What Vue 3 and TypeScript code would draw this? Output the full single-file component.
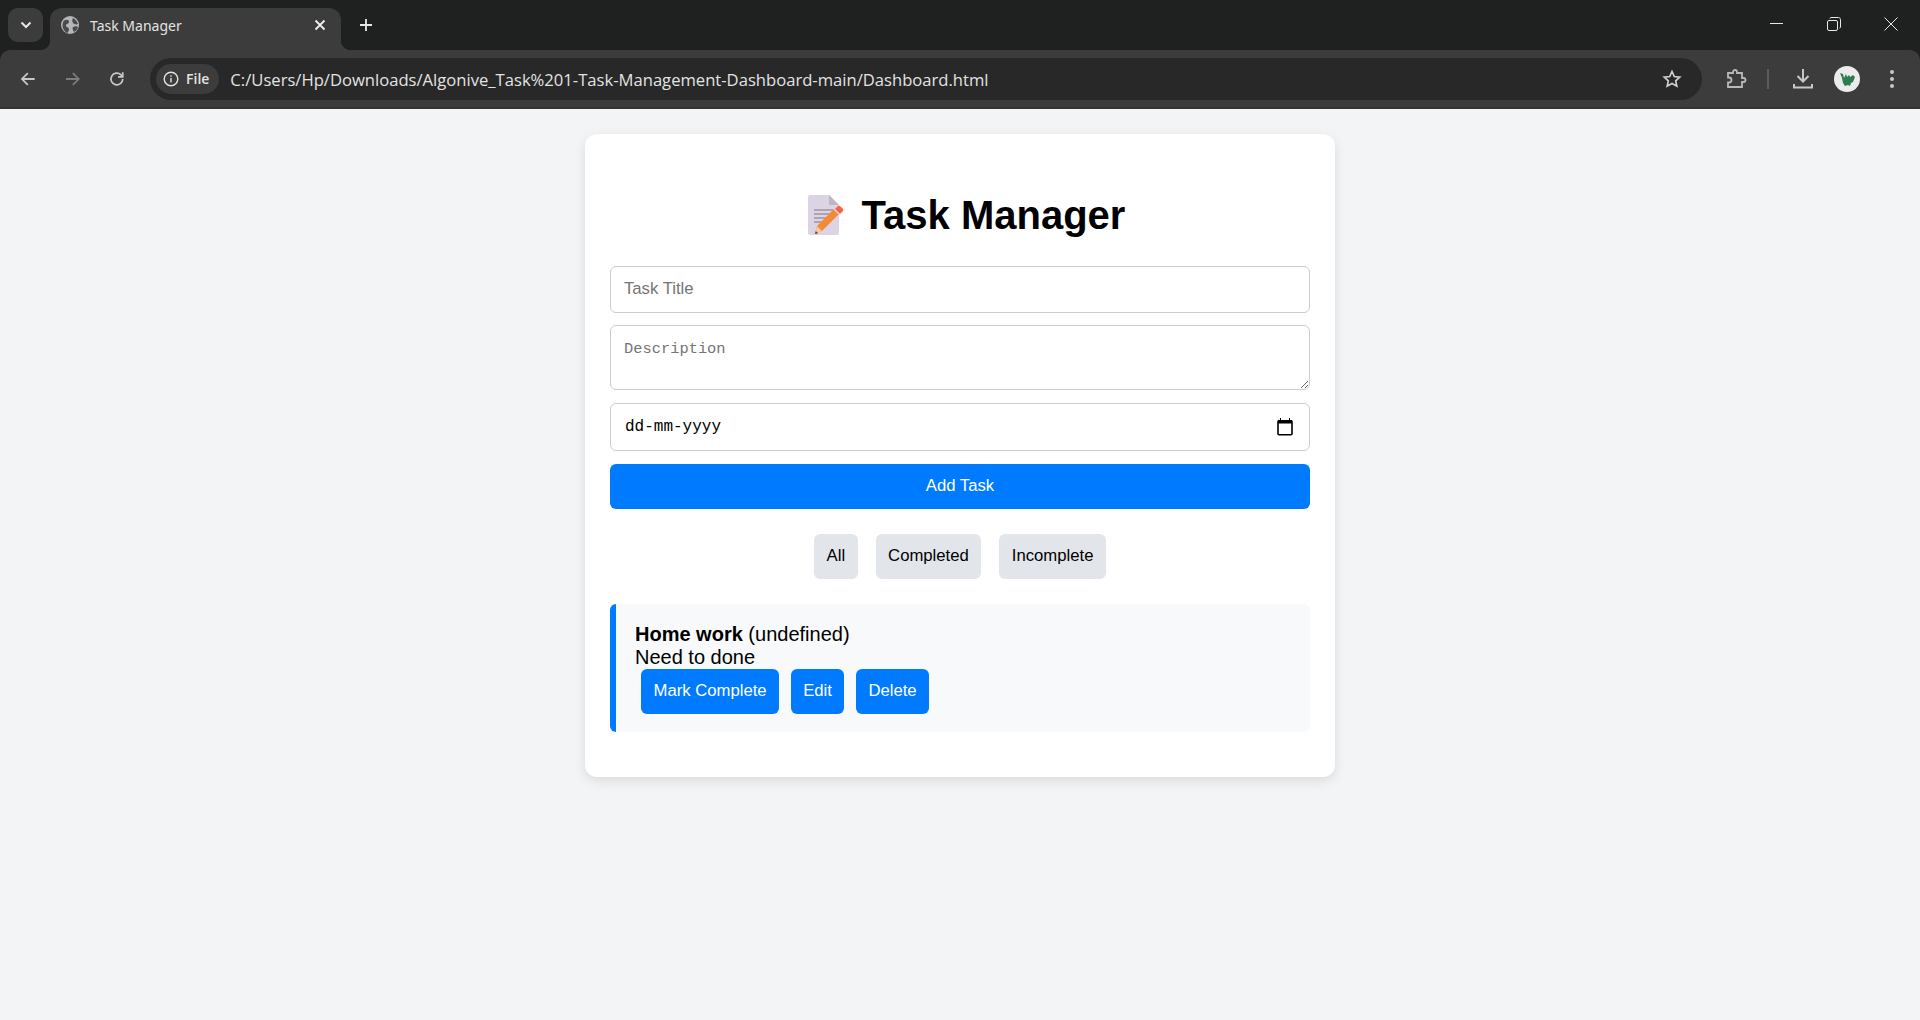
<script setup lang="ts">
import { ref } from 'vue';

const title = ref('');
const description = ref('');
const filters = ['All', 'Completed', 'Incomplete'];
const taskActions = ['Mark Complete', 'Edit', 'Delete'];
</script>

<template>
  <div class="page">
    <header class="browser">
      <div class="tabstrip">
        <button class="tab-search" aria-label="Search tabs">
          <svg width="16" height="16" viewBox="0 0 16 16"><path d="M3.500 5.500l4.500 4.500 4.500-4.500" fill="none" stroke="#e6e6e6" stroke-width="2" /></svg>
        </button>
        <div class="tab">
          <svg class="favicon" width="18" height="18" viewBox="0 0 18 18">
            <circle cx="9" cy="9" r="9" fill="#b4b6b8" />
            <path d="M3 4.500C6 3 8 4 8 6c0 2-3 1.500-3 3.500S8 11 8 13c0 2-1 3.500-2 4C2 15 0 9 3 4.500zM12 2c2 1 4 3 5 6-2 1-4 0-5-1-1-2-1-3 0-5zM12 11c2-1 4-1 5 0-1 3-2 4-4 5-1-2-2-3-1-5z" fill="#4a4b4d" />
          </svg>
          <span class="tab-title">Task Manager</span>
          <svg class="tab-close" width="12" height="12" viewBox="0 0 12 12"><path d="M1.500 1.500l9 9M10.500 1.500l-9 9" stroke="#f0f0f0" stroke-width="1.800" /></svg>
        </div>
        <svg class="new-tab" width="14" height="14" viewBox="0 0 14 14"><path d="M7 1v12M1 7h12" stroke="#e8e8e8" stroke-width="1.800" /></svg>
        <div class="window-controls">
          <svg width="14" height="14" viewBox="0 0 14 14"><path d="M0 6.500h13" stroke="#e8e8e8" stroke-width="1" /></svg>
          <svg width="14" height="14" viewBox="0 0 14 14" fill="none" stroke="#e8e8e8"><rect x="0.500" y="3.500" width="10" height="10" rx="1.500" /><path d="M3 1.500c0-.6.5-1 1-1h7.500c1 0 2 1 2 2V10c0 .6-.4 1-1 1" /></svg>
          <svg width="14" height="14" viewBox="0 0 14 14"><path d="M.5.500l13 13M13.500.500l-13 13" stroke="#e8e8e8" stroke-width="1" /></svg>
        </div>
      </div>
      <div class="toolbar">
        <svg width="18" height="18" viewBox="0 0 18 18" fill="none" stroke="#c7c7c7" stroke-width="1.800"><path d="M16 9H3M9 3L3 9l6 6" /></svg>
        <svg width="18" height="18" viewBox="0 0 18 18" fill="none" stroke="#7d7d7d" stroke-width="1.800"><path d="M2 9h13M9 3l6 6-6 6" /></svg>
        <svg width="18" height="18" viewBox="0 0 18 18" fill="none" stroke="#c7c7c7" stroke-width="1.800"><path d="M15 9a6 6 0 1 1-1.800-4.300L15 6.500" /><path d="M15 2v4.800h-4.800" /></svg>
        <div class="omnibox">
          <div class="chip">
            <svg width="16" height="16" viewBox="0 0 16 16" fill="none" stroke="#e3e3e3" stroke-width="1.400"><circle cx="8" cy="8" r="6.800" /><path d="M8 7v4.500M8 4.200v1.600" /></svg>
            <span>File</span>
          </div>
          <span class="url">C:/Users/Hp/Downloads/Algonive_Task%201-Task-Management-Dashboard-main/Dashboard.html</span>
          <svg class="star" width="20" height="20" viewBox="0 0 20 20"><path d="M10 2.500l2.300 5 5.400.6-4 3.700 1.100 5.400-4.800-2.700-4.800 2.700 1.100-5.400-4-3.700 5.400-.6z" fill="none" stroke="#d0d0d0" stroke-width="1.700" /></svg>
        </div>
        <div class="toolbar-end">
          <svg width="22" height="22" viewBox="0 0 22 22"><path d="M3 5h5V4a2 2 0 0 1 4 0v1h5v5h1.500a2 2 0 0 1 0 4H17v5H3v-4.500h1a2 2 0 0 0 0-5H3z" fill="none" stroke="#b8b8b8" stroke-width="1.800" /></svg>
          <span class="divider"></span>
          <svg class="download" width="22" height="22" viewBox="0 0 22 22" fill="none" stroke="#c7c7c7" stroke-width="2"><path d="M11 1v12M5.500 8l5.500 5.500L16.500 8M2 16v3.500h18V16" /></svg>
          <div class="avatar">
            <svg width="26" height="26" viewBox="0 0 26 26"><circle cx="13" cy="13" r="13" fill="#ececec" /><path d="M6 7l3 1 1 4 2-4 1 3 2-2 1 2 3-2 2 2-2 5-2 1-1 3-2-1-3 1-2-3-1-5z" fill="#2e7d52" /></svg>
          </div>
          <svg class="menu" width="6" height="20" viewBox="0 0 6 20" fill="#c7c7c7"><circle cx="3" cy="3" r="2" /><circle cx="3" cy="10" r="2" /><circle cx="3" cy="17" r="2" /></svg>
        </div>
      </div>
    </header>

    <main class="content">
      <section class="card">
        <h1 class="heading">
          <svg class="emoji" width="36" height="40" viewBox="0 0 36 40">
            <path d="M0 2a2 2 0 0 1 2-2h19l10 10v28a2 2 0 0 1-2 2H2a2 2 0 0 1-2-2z" fill="#dcd4e4" />
            <path d="M21 0l10 10H21z" fill="#bdb6c4" />
            <path d="M6 15h19M6 19h19M6 23h16M6 27h9" stroke="#9c95a4" stroke-width="1.600" />
            <path d="M7 39l2-8 17-17 5 5-17 17z" fill="#f58a35" />
            <path d="M27 14l3-3a2 2 0 0 1 2 0l3 3a2 2 0 0 1 0 2l-3 3z" fill="#fb6149" />
            <path d="M26 15l1-1 5 5-1 1z" fill="#f4d0c0" />
            <path d="M7 39l2-8 5 5z" fill="#f4c8a0" />
            <path d="M7 39l.8-3 2.200 2.200z" fill="#5a3050" />
          </svg>
          <span>Task Manager</span>
        </h1>
        <form class="task-form" @submit.prevent>
          <input v-model="title" class="field" type="text" placeholder="Task Title" />
          <textarea v-model="description" class="field area" placeholder="Description"></textarea>
          <div class="field date">
            <span>dd-mm-yyyy</span>
            <svg width="16" height="18" viewBox="0 0 16 18"><path d="M3.500 0v2M12.500 0v2" stroke="#000" /><rect x="1" y="2.800" width="14" height="14" rx="1" fill="none" stroke="#000" stroke-width="1.600" /><rect x="1" y="2" width="14" height="3.500" /></svg>
          </div>
          <button class="primary wide" type="submit">Add Task</button>
        </form>
        <div class="filters">
          <button v-for="f in filters" :key="f" class="filter">{{ f }}</button>
        </div>
        <article class="task">
          <div class="task-text"><strong>Home work</strong> (undefined)<br />Need to done</div>
          <div class="task-actions">
            <button v-for="a in taskActions" :key="a" class="primary">{{ a }}</button>
          </div>
        </article>
      </section>
    </main>
  </div>
</template>

<style>
body {
  margin: 0;
  background: #f3f4f6;
}
</style>

<style scoped>
.page {
  min-height: 1020px;
  font-family: "Liberation Sans", Arial, sans-serif;
  background: #f3f4f6;
}

.browser {
  font-family: "Open Sans", "Noto Sans", sans-serif;
  background: #1f2120;
}

.tabstrip {
  height: 50px;
  display: flex;
  align-items: flex-end;
  padding-left: 8px;
  box-sizing: border-box;
}

.tab-search {
  width: 35px;
  height: 34px;
  margin-bottom: 8px;
  border: 0;
  border-radius: 10px;
  background: #3c3c3c;
  display: flex;
  align-items: center;
  justify-content: center;
  padding: 0;
}

.tab {
  position: relative;
  width: 291px;
  height: 42px;
  margin-left: 7px;
  padding: 0 15px 8px 11px;
  box-sizing: border-box;
  display: flex;
  align-items: center;
  background: #3c3c3c;
  border-radius: 12px 12px 0 0;
  color: #e3e3e3;
  font-size: 14px;
}

.tab::before,
.tab::after {
  content: "";
  position: absolute;
  bottom: 0;
  width: 10px;
  height: 10px;
}

.tab::before {
  left: -10px;
  background: radial-gradient(circle at 0 0, transparent 10px, #3c3c3c 10.5px);
}

.tab::after {
  right: -10px;
  background: radial-gradient(circle at 100% 0, transparent 10px, #3c3c3c 10.5px);
}

.favicon {
  flex: none;
}

.tab-title {
  margin-left: 11px;
  flex: 1;
  font-family: "Noto Sans", sans-serif;
}

.new-tab {
  margin: 0 0 18px 18px;
}

.window-controls {
  margin-left: auto;
  height: 50px;
  display: flex;
  align-items: center;
  gap: 43px;
  padding: 0 22px 2px 0;
  box-sizing: border-box;
}

.toolbar {
  height: 59px;
  background: #3c3c3c;
  display: flex;
  align-items: center;
  padding: 0 25px 0 19px;
  gap: 27px;
  box-sizing: border-box;
  border-radius: 10px 10px 0 0;
  border-bottom: 2px solid #333;
}

.omnibox {
  width: 1552px;
  height: 42px;
  margin-left: -3px;
  flex: none;
  display: flex;
  align-items: center;
  background: #282828;
  border-radius: 21px;
  padding: 0 20px 0 6px;
  box-sizing: border-box;
}

.chip {
  height: 30px;
  display: flex;
  align-items: center;
  gap: 7px;
  padding: 0 10px 0 7px;
  background: #3c3c3c;
  border-radius: 15px;
  color: #e3e3e3;
  font-size: 14px;
  font-weight: 600;
}

.url {
  margin-left: 11px;
  padding-top: 1px;
  flex: 1;
  color: #e3e3e3;
  font-size: 16.63px;
  white-space: nowrap;
}

.toolbar-end {
  margin-left: -4px;
  display: flex;
  align-items: center;
  gap: 20px;
}

.divider {
  width: 2px;
  height: 20px;
  background: #5c5c5c;
}

.download {
  margin-left: 3px;
}

.avatar {
  width: 26px;
  height: 26px;
}

.menu {
  margin-left: 9px;
}

.content {
  display: flex;
  justify-content: center;
  padding-top: 25px;
}

.card {
  width: 750px;
  box-sizing: border-box;
  padding: 25px 25px 45px;
  background: #fff;
  border-radius: 12px;
  box-shadow: 0 4px 12px rgba(0, 0, 0, 0.1);
}

.heading {
  margin: 33px 0 28px;
  padding-left: 13px;
  display: flex;
  justify-content: center;
  align-items: center;
  gap: 18px;
  font-size: 40px;
  line-height: 46px;
  font-weight: 700;
  color: #000;
}

.emoji {
  flex: none;
}

.task-form {
  display: flex;
  flex-direction: column;
  gap: 12px;
}

.field {
  width: 100%;
  box-sizing: border-box;
  height: 47px;
  padding: 0 13px 2px;
  border: 1px solid #ccc;
  border-radius: 6px;
  background: #fff;
  font-family: inherit;
  font-size: 16.7px;
  outline: none;
}

.field::placeholder {
  color: #757575;
}

.area {
  height: 65px;
  padding-top: 14px;
  font-family: "Liberation Mono", monospace;
  font-size: 15.4px;
  display: block;
}

.date {
  height: 48px;
  margin-top: 1px;
  display: flex;
  align-items: center;
  justify-content: space-between;
  font-family: "Liberation Mono", monospace;
  font-size: 16px;
  padding: 0 16px 0 14px;
  color: #000;
}

.primary {
  height: 45px;
  border: 0;
  border-radius: 6px;
  padding: 0 12.5px 2px;
  background: #007bff;
  color: #fff;
  font-family: inherit;
  font-size: 16.7px;
}

.wide {
  width: 100%;
  margin-top: 1px;
}

.filters {
  margin-top: 25px;
  display: flex;
  justify-content: center;
  gap: 18px;
}

.filter {
  height: 45px;
  border: 0;
  border-radius: 6px;
  padding: 0 12.5px 2px;
  background: #e2e5ea;
  color: #000;
  font-family: inherit;
  font-size: 16.7px;
}

.task {
  margin-top: 25px;
  height: 128px;
  box-sizing: border-box;
  padding: 19px 19px 0;
  background: #f8f9fa;
  border-left: 6px solid #007bff;
  border-radius: 6px;
  color: #000;
  font-size: 20px;
  line-height: 23px;
}

.task-actions {
  display: flex;
  gap: 11.5px;
  margin-left: 6px;
}
</style>
